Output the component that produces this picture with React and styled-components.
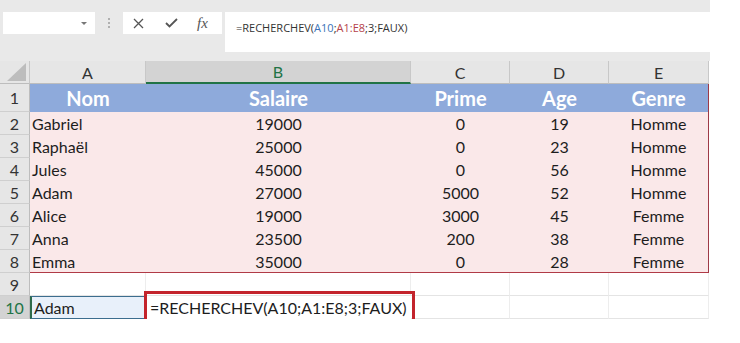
import React from 'react'
import styled, { createGlobalStyle } from 'styled-components'

const GlobalStyle = createGlobalStyle`
  body {
    margin: 0;
    background: #fff;
    font-family: Lato, "Open Sans", sans-serif;
  }
`

const Window = styled.div`
  width: 710px;
`

const FormulaBar = styled.div`
  height: 61px;
  background: #e9e9e9;
  display: flex;
  align-items: flex-start;
  padding: 12px 0 0 3px;
  box-sizing: border-box;
`

const NameBox = styled.div`
  width: 92px;
  height: 22px;
  background: #fff;
  display: flex;
  align-items: center;
  justify-content: flex-end;
  padding-right: 8px;
  box-sizing: border-box;
`

const Arrow = styled.span`
  width: 0;
  height: 0;
  border-left: 3px solid transparent;
  border-right: 3px solid transparent;
  border-top: 3px solid #777;
`

const Grip = styled.div`
  width: 28px;
  height: 22px;
  display: flex;
  flex-direction: column;
  align-items: center;
  justify-content: center;
  gap: 2px;
  span {
    width: 2px;
    height: 2px;
    background: #b0b0b0;
  }
`

const FnBox = styled.div`
  width: 99px;
  height: 22px;
  background: #fff;
  display: flex;
  align-items: center;
  padding-left: 10px;
  gap: 21px;
  box-sizing: border-box;
`

const Fx = styled.span`
  font-family: "Liberation Serif", serif;
  font-style: italic;
  font-size: 15px;
  color: #555;
  margin-left: -2px;
`

const FormulaInput = styled.div`
  flex: 1;
  height: 40px;
  margin-left: 3px;
  background: #fff;
  padding: 8px 11px;
  box-sizing: border-box;
  font-family: "Open Sans", sans-serif;
  font-size: 11px;
  color: #333;
`

const Ref = styled.span`
  color: ${(p) => p.color};
`

const Sheet = styled.div`
  display: grid;
  grid-template-columns: 30px 116px 265px 99px 99px 100px;
  grid-template-rows: 23px 28px repeat(9, 23px);
  font-size: 16px;
  color: #1d1d1d;
`

const Corner = styled.div`
  background: #e6e6e6;
  border-right: 1px solid #c8c8c8;
  border-bottom: 1px solid #bdbdbd;
  display: flex;
  align-items: flex-end;
  justify-content: flex-end;
  padding: 0 3px 2px 0;
`

const ColHead = styled.div`
  background: ${(p) => (p.$active ? '#d3d3d3' : '#e6e6e6')};
  color: ${(p) => (p.$active ? '#217346' : '#333')};
  border-right: 1px solid #c8c8c8;
  border-bottom: ${(p) => (p.$active ? '2px solid #217346' : '1px solid #bdbdbd')};
  display: flex;
  align-items: center;
  justify-content: center;
  box-sizing: border-box;
`

const RowHead = styled.div`
  background: ${(p) => (p.$active ? '#d3d3d3' : '#e6e6e6')};
  color: ${(p) => (p.$active ? '#217346' : '#333')};
  border-right: 1px solid #bdbdbd;
  border-bottom: 1px solid #cfcfcf;
  display: flex;
  align-items: center;
  justify-content: center;
  box-sizing: border-box;
`

const Cell = styled.div`
  position: relative;
  display: flex;
  align-items: center;
  justify-content: ${(p) => (p.$center ? 'center' : 'flex-start')};
  padding-left: ${(p) => (p.$center ? '0' : '2px')};
  box-sizing: border-box;
  background: ${(p) => p.$bg || '#fff'};
  white-space: nowrap;
  border-right: ${(p) => (p.$edge ? '1.5px solid #9e3a47' : p.$grid ? '1px solid #ededed' : 'none')};
  border-bottom: ${(p) => (p.$bottom ? '1.5px solid #b03a46' : p.$grid ? '1px solid #e4e4e4' : 'none')};
`

const HeadCell = styled(Cell)`
  background: #8eaadb;
  color: #fff;
  font-weight: 700;
  font-size: 20px;
`

const Lookup = styled(Cell)`
  background: #e8f0fa;
  border: 1px solid #3b6d8e;
  border-left: 2px solid #2d6b4c;
`

const Highlight = styled(Cell)`
  padding-left: 4px;
  z-index: 1;
  &::after {
    content: '';
    position: absolute;
    top: -5px;
    left: -2px;
    right: -4px;
    bottom: -3px;
    border: 3px solid #c3242c;
  }
`

const cols = ['A', 'B', 'C', 'D', 'E']
const headers = ['Nom', 'Salaire', 'Prime', 'Age', 'Genre']
const rows = [
  ['Gabriel', 19000, 0, 19, 'Homme'],
  ['Raphaël', 25000, 0, 23, 'Homme'],
  ['Jules', 45000, 0, 56, 'Homme'],
  ['Adam', 27000, 5000, 52, 'Homme'],
  ['Alice', 19000, 3000, 45, 'Femme'],
  ['Anna', 23500, 200, 38, 'Femme'],
  ['Emma', 35000, 0, 28, 'Femme'],
]

const App = () => {
  return (
    <Window>
      <GlobalStyle />
      <FormulaBar>
        <NameBox><Arrow /></NameBox>
        <Grip><span /><span /><span /></Grip>
        <FnBox>
          <svg width="11" height="11" viewBox="0 0 11 11">
            <path d="M1 1 L10 10 M10 1 L1 10" stroke="#555" strokeWidth="1.3" fill="none" />
          </svg>
          <svg width="13" height="10" viewBox="0 0 13 10">
            <path d="M1 5 L4.5 8.5 L12 1" stroke="#555" strokeWidth="1.8" fill="none" />
          </svg>
          <Fx>fx</Fx>
        </FnBox>
        <FormulaInput>
          =RECHERCHEV(<Ref color="#3a73b8">A10</Ref>;<Ref color="#b5424a">A1:E8</Ref>;3;FAUX)
        </FormulaInput>
      </FormulaBar>
      <Sheet>
        <Corner>
          <svg width="19" height="18" viewBox="0 0 19 18">
            <polygon points="19,0 19,18 0,18" fill="#bdbdbd" />
          </svg>
        </Corner>
        {cols.map((c) => (
          <ColHead key={c} $active={c === 'B'}>{c}</ColHead>
        ))}

        <RowHead>1</RowHead>
        {headers.map((h, i) => (
          <HeadCell key={h} $center $edge={i === 4}>{h}</HeadCell>
        ))}

        {rows.map((r, ri) => (
          <React.Fragment key={ri}>
            <RowHead>{ri + 2}</RowHead>
            {r.map((v, ci) => (
              <Cell
                key={ci}
                $bg="#fae8e9"
                $center={ci > 0}
                $edge={ci === 4}
                $bottom={ri === rows.length - 1}
              >
                {v}
              </Cell>
            ))}
          </React.Fragment>
        ))}

        <RowHead>9</RowHead>
        {cols.map((c) => (
          <Cell key={c} $grid />
        ))}

        <RowHead $active>10</RowHead>
        <Lookup>Adam</Lookup>
        <Highlight>=RECHERCHEV(A10;A1:E8;3;FAUX)</Highlight>
        <Cell $grid />
        <Cell $grid />
        <Cell $grid />
      </Sheet>
    </Window>
  )
}

export default App
